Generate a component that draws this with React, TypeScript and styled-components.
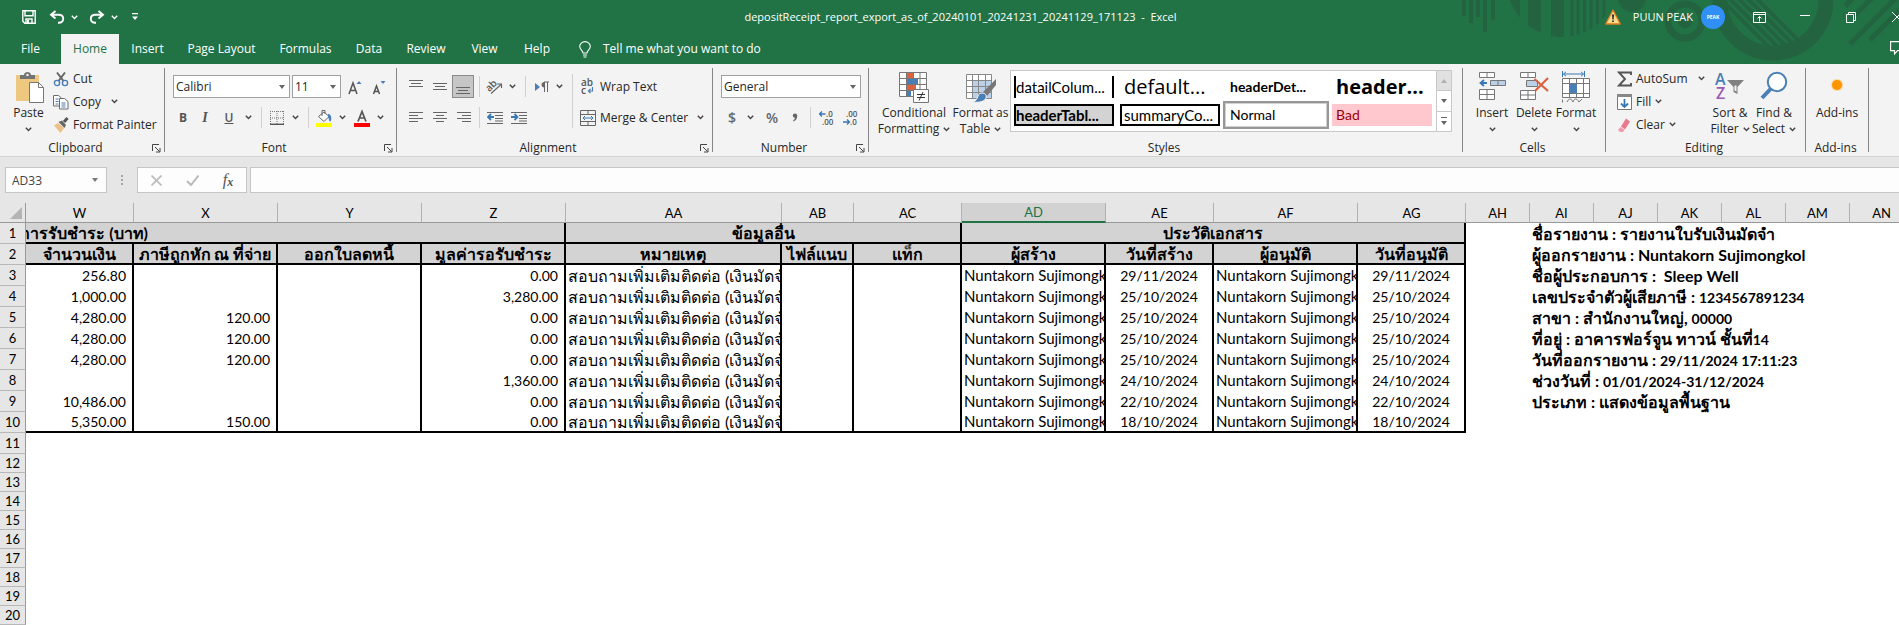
import React from 'react';
import styled, { createGlobalStyle, css } from 'styled-components';

const UI_FONT = '"Open Sans", "Noto Sans", sans-serif';
const SHEET_FONT = 'Lato, "Noto Sans", sans-serif';
const GREEN = '#217346';

const GlobalStyle = createGlobalStyle`
  *, *::before, *::after { box-sizing: border-box; }
  html, body { margin: 0; padding: 0; height: 100%; }
  #root { height: 100%; }
  body { background: #fff; color: #262626; font: 12px/16px ${UI_FONT}; overflow: hidden; }
  button, input, select { font: inherit; color: inherit; margin: 0; }
`;

const Window = styled.div`
  display: flex;
  flex-direction: column;
  min-height: 100%;
  overflow: hidden;
`;

/* ---------- title bar and tabs ---------- */

const Header = styled.header`
  position: relative;
  background: ${GREEN};
  color: #fff;
  overflow: hidden;
`;

const Artwork = styled.svg`
  position: absolute;
  top: 0;
  right: 0;
`;

const TitleBar = styled.div`
  position: relative;
  display: grid;
  grid-template-columns: 1fr auto 1fr;
  align-items: center;
  height: 34px;
  font-size: 11px;
`;

const QuickAccess = styled.div`
  display: flex;
  align-items: center;
  gap: 11px;
  padding-left: 20px;
`;

const BareButton = styled.button<{ $w?: number }>`
  display: flex;
  align-items: center;
  justify-content: center;
  flex: none;
  gap: 6px;
  width: ${p => (p.$w ? `${p.$w}px` : 'auto')};
  height: 24px;
  padding: 0;
  border: 0;
  background: none;
`;

const CloseButton = styled(BareButton)`
  margin-right: -32px;
`;

const DocTitle = styled.h1`
  margin: 0;
  padding-left: 22px;
  font-size: 11px;
  font-weight: 400;
  line-height: 16px;
  white-space: pre;
`;

const Account = styled.div`
  display: flex;
  align-items: center;
  justify-content: flex-end;
  white-space: nowrap;
`;

const UserName = styled.span`
  margin: 0 8px 0 12px;
`;

const Avatar = styled.span`
  display: flex;
  align-items: center;
  justify-content: center;
  width: 24px;
  height: 24px;
  margin-right: 22px;
  border-radius: 50%;
  background: #3090f8;
  font-size: 5px;
  font-weight: 700;
`;

const Tabs = styled.nav`
  position: relative;
  display: flex;
  height: 30px;
`;

const Tab = styled.button<{ $w: number; $active?: boolean }>`
  width: ${p => p.$w}px;
  padding: 0;
  border: 0;
  background: ${p => (p.$active ? '#f3f3f3' : 'none')};
  color: ${p => (p.$active ? GREEN : '#fff')};
  white-space: nowrap;
`;

const TellMe = styled.button`
  display: flex;
  align-items: center;
  gap: 12px;
  margin-left: 16px;
  padding: 0;
  border: 0;
  background: none;
`;

const CommentButton = styled(BareButton)`
  margin: 2px -8px 0 auto;
`;

/* ---------- ribbon ---------- */

const Ribbon = styled.section`
  display: flex;
  height: 93px;
  background: #f3f3f3;
  border-bottom: 1px solid #d2d2d2;
`;

const Group = styled.div<{ $w: number }>`
  display: flex;
  flex-direction: column;
  flex: none;
  width: ${p => p.$w}px;
`;

const GroupBody = styled.div<{ $pad?: number }>`
  display: flex;
  height: 76px;
  padding-left: ${p => p.$pad ?? 0}px;
`;

const GroupLabel = styled.div`
  display: flex;
  align-items: center;
  height: 16px;
  padding-right: 3px;
  text-align: center;

  span { flex: 1; }
`;

const Divider = styled.span`
  flex: none;
  width: 1px;
  margin: 4px 0;
  background: #868686;
`;

const Separator = styled.span<{ $left?: number; $right?: number }>`
  flex: none;
  width: 1px;
  height: 21px;
  margin: 0 ${p => p.$right ?? 0}px 0 ${p => p.$left ?? 0}px;
  background: #d0d0d0;
`;

const TallSeparator = styled.span`
  flex: none;
  width: 1px;
  height: 54px;
  margin: 10px 7px 0 6px;
  background: #d0d0d0;
`;

const LargeButton = styled.button<{ $w: number }>`
  display: flex;
  flex-direction: column;
  align-items: center;
  flex: none;
  width: ${p => p.$w}px;
  padding: 7px 0 0;
  border: 0;
  background: none;
  line-height: 16px;
  white-space: nowrap;

  > svg { margin-bottom: 2px; flex: none; }
`;

const Line = styled.span`
  display: flex;
  align-items: center;
  justify-content: center;
  gap: 4px;
  height: 16px;
`;

const SmallList = styled.div<{ $w?: number }>`
  display: flex;
  flex-direction: column;
  align-items: flex-start;
  flex: none;
  width: ${p => (p.$w ? `${p.$w}px` : 'auto')};
  padding-top: 3px;
`;

const SmallButton = styled.button<{ $gap?: number }>`
  display: flex;
  align-items: center;
  gap: 4px;
  height: 23px;
  padding: 0;
  border: 0;
  background: none;
  white-space: nowrap;

  > svg:last-child:not(:first-child) { margin-left: ${p => p.$gap ?? 0}px; }
`;

const ToolRows = styled.div`
  display: flex;
  flex-direction: column;
  gap: 8px;
  padding-top: 11px;
`;

const ToolRow = styled.div`
  display: flex;
  align-items: center;
  height: 23px;
`;

const Tool = styled.button<{ $w?: number; $on?: boolean; $styleName?: 'b' | 'i' | 'u' | 'sign' }>`
  display: flex;
  align-items: center;
  justify-content: center;
  flex: none;
  width: ${p => p.$w ?? 24}px;
  height: 23px;
  padding: 0;
  color: #555;
  border: ${p => (p.$on ? '1px solid #8a8a8a' : '0')};
  background: ${p => (p.$on ? '#c6c6c6' : 'none')};
  ${p => p.$styleName === 'b' && css`font-weight: 700;`}
  ${p => p.$styleName === 'i' && css`font: italic 700 14px "Liberation Serif", serif;`}
  ${p => p.$styleName === 'u' && css`font-weight: 600; text-decoration: underline;`}
  ${p => p.$styleName === 'sign' && css`font-size: 14px; font-weight: 600; color: #666;`}
`;

const Combo = styled.label<{ $w: number }>`
  position: relative;
  display: block;
  flex: none;
  width: ${p => p.$w}px;
  height: 23px;
  margin-right: 2px;

  &::after {
    content: '';
    position: absolute;
    top: 10px;
    right: 5px;
    border: 3px solid transparent;
    border-top: 4px solid #666;
    border-bottom: 0;
  }
`;

const ComboSelect = styled.select`
  width: 100%;
  height: 100%;
  padding: 0 2px;
  border: 1px solid #a0a0a0;
  border-radius: 0;
  background: #fff;
  appearance: none;
`;

/* ---------- style gallery ---------- */

const Gallery = styled.div`
  display: flex;
  width: 442px;
  height: 62px;
  margin-top: 6px;
  border: 1px solid #c8c8c8;
  background: #fff;
`;

const Swatches = styled.div`
  display: grid;
  grid-template-columns: repeat(4, 106px);
  grid-template-rows: 28px 28px;
  flex: 1;
  align-content: center;
`;

type SwatchKind = 'sides' | 'title' | 'bold' | 'boldTitle' | 'table' | 'box' | 'normal' | 'bad';

const Swatch = styled.button<{ $kind: SwatchKind }>`
  display: flex;
  align-items: center;
  height: 22px;
  margin: 3px;
  padding: 0 4px;
  overflow: hidden;
  border: 0;
  background: #fff;
  color: #000;
  font: 15px/18px ${SHEET_FONT};
  white-space: nowrap;
  ${p => p.$kind === 'sides' && css`padding: 0; border: solid #000; border-width: 0 2px;`}
  ${p => p.$kind === 'title' && css`font: 20px/22px "Open Sans", sans-serif;`}
  ${p => p.$kind === 'bold' && css`font-weight: 700; font-size: 14px;`}
  ${p => p.$kind === 'boldTitle' && css`font: 700 20px/22px "Open Sans", sans-serif;`}
  ${p => p.$kind === 'table' && css`padding: 0; border: 2px solid #000; background: #d3d3d3; font-weight: 700;`}
  ${p => p.$kind === 'box' && css`padding: 0 2px; border: 2px solid #000;`}
  ${p => p.$kind === 'normal' && css`height: 28px; margin: 0; padding: 0 5px; border: 2px solid #979797; outline: 1px solid #d2d0ce; outline-offset: -3px; font-size: 14px;`}
  ${p => p.$kind === 'bad' && css`background: #ffc7ce; color: #9c0006; font-size: 14px;`}
`;

const GalleryScroll = styled.div`
  display: flex;
  flex-direction: column;
  width: 15px;
  border-left: 1px solid #c8c8c8;
`;

const ScrollButton = styled.button<{ $off?: boolean }>`
  display: flex;
  flex: 1;
  align-items: center;
  justify-content: center;
  padding: 0;
  border: 0;
  background: ${p => (p.$off ? '#e1e1e1' : '#fff')};
  & + & { border-top: 1px solid #c8c8c8; }
`;

/* ---------- formula bar ---------- */

const FormulaBar = styled.section`
  display: flex;
  height: 46px;
  padding: 10px 0 10px 5px;
  background: #e6e6e6;
`;

const NameBox = styled.label`
  display: flex;
  align-items: center;
  width: 102px;
  padding-right: 8px;
  border: 1px solid #c6c6c6;
  background: #fdfdfd;
`;

const NameInput = styled.input`
  flex: 1;
  min-width: 0;
  height: 22px;
  padding: 0 6px;
  border: 0;
  background: none;
  color: #444;
`;

const Grip = styled.span`
  width: 30px;
  display: flex;
  align-items: center;
  justify-content: center;
`;

const FormulaButtons = styled.div`
  display: flex;
  align-items: center;
  width: 110px;
  margin-right: 3px;
  border: 1px solid #c6c6c6;
  background: #fdfdfd;
`;

const FunctionButton = styled(BareButton)`
  gap: 0;
  color: #555;
  font: italic 16px "Liberation Serif", serif;

  small { padding-top: 4px; font-size: 12px; font-weight: 700; }
`;

const FormulaInput = styled.input`
  flex: 1;
  min-width: 0;
  padding: 0 6px;
  border: 1px solid #c6c6c6;
  border-right: 0;
  background: #fdfdfd;
`;

/* ---------- sheet ---------- */

const SheetArea = styled.main`
  flex: 1;
  overflow: hidden;
  background: #fff;
`;

const Sheet = styled.table`
  width: 1914px;
  table-layout: fixed;
  border-collapse: separate;
  border-spacing: 0;
  color: #000;
  font: 14px/18px ${SHEET_FONT};
`;

const ColumnHead = styled.th<{ $active?: boolean }>`
  height: 20px;
  padding: 0;
  border-right: 1px solid #b1b1b1;
  border-bottom: 1px solid #999;
  background: #e6e6e6;
  font-weight: 400;
  font-size: 13px;
  ${p => p.$active && css`background: #d2d2d2; color: ${GREEN}; border-bottom: 2px solid ${GREEN};`}
`;

const Corner = styled(ColumnHead)`
  border-right-color: #999;

  svg { display: block; margin-left: auto; margin-right: 3px; }
`;

const RowHead = styled.th`
  padding: 0;
  border-right: 1px solid #999;
  border-bottom: 1px solid #b8b8b8;
  background: #e6e6e6;
  font-weight: 400;
  font-size: 13px;
  line-height: 16px;
`;

const Row = styled.tr<{ $short?: boolean }>`
  height: ${p => (p.$short ? 19 : 21)}px;
`;

const BandCell = styled.th`
  height: 21px;
  padding: 0;
  overflow: hidden;
  border-right: 2px solid #000;
  border-bottom: 2px solid #000;
  background: #d3d3d3;
  font-size: 16px;
  line-height: 19px;
  white-space: nowrap;
`;

const ScrolledTitle = styled.div`
  display: flex;
  justify-content: flex-end;
  width: 122px;
  overflow: hidden;
`;

const DataCell = styled.td<{ $align: 'left' | 'center' | 'right'; $size?: number; $last?: boolean }>`
  height: 21px;
  padding: ${p => (p.$align === 'right' ? '0 6px 0 0' : p.$align === 'left' ? '0 0 0 2px' : '0')};
  overflow: hidden;
  border-right: 2px solid #000;
  border-bottom: ${p => (p.$last ? '2px solid #000' : '0')};
  font-size: ${p => p.$size ?? 14}px;
  line-height: 19px;
  text-align: ${p => p.$align};
  white-space: nowrap;
`;

const InfoCell = styled.td`
  height: 21px;
  padding: 0 0 0 2px;
  font-size: 16px;
  font-weight: 700;
  line-height: 19px;
  white-space: pre;
`;

const Digits = styled.span`
  font-size: 14px;
`;

/* ---------- icons ---------- */

const Chevron = ({ color = '#444' }: { color?: string }) => (
  <svg width="7" height="5" viewBox="0 0 7 5" fill="none" stroke={color} strokeWidth="1.4"><path d="M.8.8 3.5 3.5 6.2.8" /></svg>
);

const Caret = ({ up, color = '#666' }: { up?: boolean; color?: string }) => (
  <svg width="6" height="4" viewBox="0 0 6 4" fill={color}><path d={up ? 'M3 0 6 4H0z' : 'M0 0h6L3 4z'} /></svg>
);

const Launcher = () => (
  <svg width="9" height="9" viewBox="0 0 9 9" fill="none" stroke="#444"><path d="M.5 7V.5H7M3 3l4.5 4.5M8 4v4H4" /></svg>
);

const SaveIcon = () => (
  <svg width="14" height="14" viewBox="0 0 14 14" fill="none" stroke="#fff" strokeWidth="1.4"><path d="M.8.8h12.4v12.4H2.8l-2-2zM3 .8v5h8v-5M4 13V9h6v4" /><path d="M5 10h2v3H5z" fill="#fff" stroke="none" /></svg>
);

const UndoIcon = ({ flip }: { flip?: boolean }) => (
  <svg width="16" height="14" viewBox="0 0 16 14" fill="none" stroke="#fff" strokeWidth="1.9">
    <g transform={flip ? 'matrix(-1 0 0 1 16 0)' : undefined}><path d="M6.5 1 2 4.8 6.5 8.6M2.4 4.8H9.5c3 0 4.7 1.7 4.7 4 0 2.5-2 4-4.2 4H9" /></g>
  </svg>
);

const CustomizeIcon = () => (
  <svg width="6" height="8" viewBox="0 0 6 8" fill="#fff"><path d="M0 0h6v1.3H0zM0 3.5h6L3 7z" /></svg>
);

const BulbIcon = () => (
  <svg width="12" height="17" viewBox="0 0 12 17" fill="none" stroke="#fff" strokeWidth="1.1"><path d="M4 12c0-2.5-3.3-3.4-3.3-6.4a5.3 5 0 0 1 10.6 0C11.3 8.600 8 9.500 8 12zM4 14h4M4.500 16h3" /></svg>
);

const WarningIcon = () => (
  <svg width="16" height="16" viewBox="0 0 16 16"><path d="M8 1 15.3 15H.7z" fill="#f9d98c" stroke="#e07a1c" strokeWidth="1.3" strokeLinejoin="round" /><path d="M7 5.500h2l-.4 5H7.400zM7.200 11.500h1.600V13H7.200z" fill="#222" /></svg>
);

const RibbonOptionsIcon = () => (
  <svg width="13" height="11" viewBox="0 0 13 11" fill="none" stroke="#fff"><path d="M.5.5h12v10H.5zM.5 2.500h12M6.500 9.500V4.500M4.500 6.500l2-2 2 2" /></svg>
);

const MinimizeIcon = () => (
  <svg width="10" height="11" viewBox="0 0 10 11" stroke="#fff"><path d="M0 3.500h10" /></svg>
);

const RestoreIcon = () => (
  <svg width="10" height="11" viewBox="0 0 10 11" fill="none" stroke="#fff"><path d="M.5 2.500h7v8h-7zM2.500 2.500v-2h7v8h-2" /></svg>
);

const CloseIcon = () => (
  <svg width="10" height="10" viewBox="0 0 10 10" stroke="#fff"><path d="m0 0 10 10M10 0 0 10" /></svg>
);

const CommentIcon = () => (
  <svg width="17" height="14" viewBox="0 0 17 14" fill="none" stroke="#fff" strokeWidth="1.1"><path d="M.6.6h15.800v9H7.500L4.500 13V9.600H.6z" /></svg>
);

const PasteIcon = () => (
  <svg width="30" height="32" viewBox="0 0 30 32">
    <path d="M2 4h23v26H2z" fill="#edc87e" /><path d="M6 8V4h4c0-4 7-4 7 0h4v4z" fill="#737373" /><circle cx="13.5" cy="4" r="1.2" fill="#f3f3f3" />
    <path d="M15.500 11.500h9l5 5v15h-14z" fill="#fff" stroke="#777" /><path d="M24.500 11.500v5h5" fill="none" stroke="#777" />
  </svg>
);

const CutIcon = () => (
  <svg width="16" height="16" viewBox="0 0 16 16" fill="none"><path d="M4 1.500 10.500 10M12 1.500 5.500 10" stroke="#666" strokeWidth="2" /><circle cx="4" cy="12" r="2.6" stroke="#4a7fb5" strokeWidth="1.4" /><circle cx="12" cy="12" r="2.6" stroke="#4a7fb5" strokeWidth="1.4" /></svg>
);

const CopyIcon = () => (
  <svg width="16" height="16" viewBox="0 0 16 16" fill="#fff" stroke="#6d6d6d"><path d="M.5 1.500h5l3 2.500v8h-8z" /><path d="M6.500 4.500h5l3.500 3V15H6.500z" /><path d="M2.500 5h3M2.500 7.500h3M2.500 10h3M8.500 9h4M8.500 11h4M8.500 13h4" stroke="#4a7fb5" /></svg>
);

const PainterIcon = () => (
  <svg width="16" height="16" viewBox="0 0 16 16"><path d="M1 8.500 5 6l6 5-3.500 5z" fill="#edc087" /><path d="M5.500 5 9 3.500l4 4.500-1.500 3z" fill="#666" /><path d="m11 5 3.500-4" stroke="#555" strokeWidth="3" /></svg>
);

const FontSizeIcon = ({ down }: { down?: boolean }) => (
  <svg width="14" height="16" viewBox="0 0 14 16" fill="none">
    {down
      ? <path d="m1.500 15 3-8 3 8M2.500 12.500h4" stroke="#555" strokeWidth="1.5" />
      : <path d="M1 15 5 4l4 11M2.300 11.500h5.400" stroke="#555" strokeWidth="1.5" />}
    <path d={down ? 'M8.500 2h5L11 5z' : 'M8.500 5h5L11 2z'} fill="#4a7fb5" />
  </svg>
);

const BordersIcon = () => (
  <svg width="14" height="14" viewBox="0 0 14 14" fill="none" stroke="#777"><path d="M0 .5h14M.5 0v14M13.500 0v14M7 0v14M0 7h14" strokeDasharray="1 1" /><path d="M0 13.300h14" stroke="#555" strokeWidth="1.4" /></svg>
);

const FillIcon = () => (
  <svg width="16" height="18" viewBox="0 0 16 18"><path d="M2.500 7.500 8 3l5 4.500-5 5z" fill="#fff" stroke="#666" /><path d="M6 7V1.500h3V5" fill="none" stroke="#666" /><path d="M12 5c3.500 0 4 5 2.500 7.500-2 0-1-3-2.500-4z" fill="#4a7fb5" /><path d="M0 14h16v4H0z" fill="#ff0" /></svg>
);

const FontColorIcon = () => (
  <svg width="16" height="18" viewBox="0 0 16 18" fill="none"><path d="m4 12.500 4-10 4 10M5.400 9h5.200" stroke="#555" strokeWidth="1.7" /><path d="M0 14h16v4H0z" fill="red" /></svg>
);

const Bars = ({ lines }: { lines: [number, number, number][] }) => (
  <svg width="14" height="17" viewBox="0 0 14 17" stroke="#666">
    {lines.map(([x1, x2, y]) => <path key={y} d={`M${x1} ${y}.5H${x2}`} />)}
  </svg>
);

const IndentIcon = ({ right }: { right?: boolean }) => (
  <svg width="16" height="14" viewBox="0 0 16 14" fill="none" stroke="#666">
    <path d="M0 1.500h16M8 4.500h8M8 7.500h8M8 10h8M0 12.500h16" />
    <path d={right ? 'M0 6h6M3.500 3 6.500 6 3.500 9' : 'M1 6h6M4 3 1 6l3 3'} stroke="#3a78b5" strokeWidth="1.8" />
  </svg>
);

const Abc = styled.text`
  font: 600 10px "Open Sans", sans-serif;
  fill: #555;
`;

const OrientationIcon = () => (
  <svg width="17" height="17" viewBox="0 0 17 17"><Abc transform="rotate(-45 6 10)" x="1" y="11">ab</Abc><path d="m5 15.500 10-9M11 6h4.500v4" fill="none" stroke="#666" strokeWidth="1.2" /></svg>
);

const DirectionIcon = () => (
  <svg width="14" height="12" viewBox="0 0 14 12"><path d="M0 2v8l5-4z" fill="#4a7fb5" /><path d="M9 1h5M9.500 1v10M12.500 1v10" stroke="#666" fill="none" /><path d="M9.500 1C5.500 1 5.500 6.500 9.500 6.500z" fill="#666" /></svg>
);

const WrapIcon = () => (
  <svg width="16" height="18" viewBox="0 0 16 18"><Abc x="1" y="8">ab</Abc><Abc x="1" y="16">c</Abc><path d="M12.500 9v4H8.500M10.500 11l-2 2 2 2" fill="none" stroke="#4a7fb5" strokeWidth="1.2" /></svg>
);

const MergeIcon = () => (
  <svg width="16" height="16" viewBox="0 0 16 16" fill="none" stroke="#666"><path d="M.5.5h15v15H.5zM.5 4.500h15M.5 11.500h15M8 .5v4M8 11.500v4" /><path d="M3 8h10M5 6 3 8l2 2M11 6l2 2-2 2" stroke="#3a78b5" /></svg>
);

const Decimal = styled.text`
  font: 600 8px "Open Sans", sans-serif;
  fill: #555;
`;

const DecimalIcon = ({ less }: { less?: boolean }) => (
  <svg width="16" height="16" viewBox="0 0 16 16">
    <Decimal x={less ? 3 : 7} y="7">{less ? '.00' : '.0'}</Decimal>
    <Decimal x={less ? 7 : 3} y="15">{less ? '.0' : '.00'}</Decimal>
    <path d={less ? 'M0 12h6M4 9.500 6.500 12 4 14.500' : 'M.5 4h6M3 1.500.5 4 3 6.500'} fill="none" stroke="#3a78b5" strokeWidth="1.3" />
  </svg>
);

const CommaIcon = () => (
  <svg width="6" height="9" viewBox="0 0 6 9" fill="#666"><circle cx="3" cy="2.6" r="2.2" /><path d="M5.200 2.500C5.300 5.500 4 7.500 1.500 8.600L1 7.800C2.500 6.800 3 5.500 3 4z" /></svg>
);

const ConditionalIcon = () => (
  <svg width="30" height="32" viewBox="0 0 30 32">
    <path d="M.5 1.500h27v24H.5z" fill="#fff" /><path d="M8 1h6v7H8zM8 14h9v6H8z" fill="#d9623f" /><path d="M8 8h11v6H8zM8 20h4v6H8z" fill="#4a7fb5" />
    <path d="M.5 1.500h27v24H.5zM7.500 1v25M14.500 1v6M21 1v25M0 7.500h28M0 13.500h28M0 19.500h28" fill="none" stroke="#777" />
    <path d="M14.500 18.500h15v13h-15z" fill="#fff" stroke="#777" /><path d="M18 23.500h8M18 26.500h8M24 21l-4 8.500" stroke="#333" />
  </svg>
);

const FormatTableIcon = () => (
  <svg width="32" height="32" viewBox="0 0 32 32">
    <path d="M1.500 3.500h25v24h-25z" fill="#fff" /><path d="M8 9h18v18H8z" fill="#bcd0e8" />
    <path d="M1.500 3.500h25v24h-25zM7.500 3v24M13.500 3v24M20.500 3v24M1 9.500h25M1 15.500h25M1 21.500h25" fill="none" stroke="#888" />
    <path d="M31 8v6l-9 11-4-4z" fill="#777" /><path d="M17 22c3 0 5 2 4 5-1 3-6 5-13 4 3-1 4-3 5-6 1-2 2-3 4-3z" fill="#4a7fb5" stroke="#f3f3f3" />
  </svg>
);

const InsertIcon = () => (
  <svg width="28" height="32" viewBox="0 0 28 32" fill="#fff" stroke="#777"><path d="M1.500 1.500h15v5h-15zM9 1.500v5M1.500 18.500h15v10h-15zM9 18.500v10M1.500 23.500h15" /><path d="M12.500 9.500h15v5h-15zM20 9.500v5" fill="#bcd0e8" /><path d="M3 12h6M6 9l-3.500 3L6 15" fill="none" stroke="#3a78b5" strokeWidth="1.8" /></svg>
);

const DeleteIcon = () => (
  <svg width="30" height="32" viewBox="0 0 30 32" fill="#fff" stroke="#777"><path d="M1.500 1.500h15v5h-15zM9 1.500v5M1.500 19.500h15v9h-15zM9 19.500v9M1.500 24h15" /><path d="M7.500 9.500h11v6h-11z" fill="#bcd0e8" /><path d="M15.500 8 29 20M29 7 16 20" fill="none" stroke="#d9623f" strokeWidth="2.2" /></svg>
);

const FormatIcon = () => (
  <svg width="30" height="32" viewBox="0 0 30 32" fill="#fff" stroke="#777"><path d="M1.500 7.500h27v19h-27zM8.500 7v20M15.500 7v20M22.500 7v20M1 12.500h28M1 22.500h28" /><path d="M9 13h7v9H9z" fill="#4a7fb5" stroke="none" /><path d="M1.500 31.500v-3M6 31c2-4 4-4 6 0 1-4 4-4 6 0l3-3" fill="none" /><path d="M1.500 0v6M23.500 0v6M2.500 3h20M5 .8 2.500 3 5 5.200M20 .8 22.500 3 20 5.200" fill="none" stroke="#3a78b5" /></svg>
);

const SumIcon = () => (
  <svg width="15" height="16" viewBox="0 0 15 16" fill="none" stroke="#555" strokeWidth="1.9"><path d="M14 4V1.500H2L8 8l-6 6.500h12V12" /></svg>
);

const FillDownIcon = () => (
  <svg width="15" height="16" viewBox="0 0 15 16" fill="#fff" stroke="#777"><path d="M.5.5h14v15H.5z" /><path d="M0 0h15v3H0z" fill="#888" stroke="none" /><path d="M7.500 5v8M4 9.500l3.500 3.500L11 9.500" fill="none" stroke="#3a78b5" strokeWidth="1.8" /></svg>
);

const EraserIcon = () => (
  <svg width="15" height="16" viewBox="0 0 15 16"><path d="m9 1.500 4 3-5 8-4-3z" fill="#e8798f" /><path d="m3.500 10 4 3L6 15H3L1 13z" fill="#f09aaa" /></svg>
);

const SortLetter = styled.text<{ $color: string }>`
  font: 600 16px "Open Sans", sans-serif;
  fill: ${p => p.$color};
`;

const SortIcon = () => (
  <svg width="30" height="32" viewBox="0 0 30 32"><SortLetter $color="#4a7fb5" x="0" y="14">A</SortLetter><SortLetter $color="#9b59b6" x="1" y="28">Z</SortLetter><path d="M12 9h17l-6.500 7v7l-4-2v-5z" fill="#808080" /><path d="M19.500 14.500h2v6l-2-1z" fill="#f3f3f3" /></svg>
);

const FindIcon = () => (
  <svg width="28" height="32" viewBox="0 0 28 32" fill="none" stroke="#4a7fb5"><circle cx="17" cy="11" r="9.2" strokeWidth="2" fill="#fff" /><path d="M10.500 18 2 27" strokeWidth="4" /></svg>
);

const AddInsIcon = () => (
  <svg width="30" height="32" viewBox="0 0 30 32"><circle cx="15" cy="14" r="6" fill="#ffd699" /><circle cx="15" cy="14" r="5" fill="#ff9500" /></svg>
);

const HeaderArt = () => (
  <Artwork width="440" height="64" viewBox="9 0 440 64" fill="none" stroke="#236340" aria-hidden="true">
    <defs>
      <clipPath id="disc"><circle cx="112" cy="-18" r="55" /></clipPath>
      <clipPath id="hole"><circle cx="323" cy="0" r="46" /></clipPath>
    </defs>
    <path d="M14 0v16M21 0v23M28 0v17M35 0v32M43 0v20" strokeWidth="4" />
    <g clipPath="url(#disc)">
      <path d="M63.500 0v40M84.500 0v40M107.500 0v40" strokeWidth="13" />
      <path d="M122 0v40M128 0v40M134.500 0v40M141 0v40M147.500 0v40M154 0v40" strokeWidth="3" />
    </g>
    <circle cx="182" cy="-2" r="14" fill="#236340" stroke="none" />
    <circle cx="235" cy="21" r="17" strokeWidth="7" /><circle cx="235" cy="21" r="7" fill="#236340" stroke="none" />
    <circle cx="323" cy="0" r="53" strokeWidth="15" />
    <path clipPath="url(#hole)" d="m262-10 60 60M271-10l60 60M280-10l60 60M289-10l60 60M298-10l60 60" strokeWidth="4" />
    <path d="m395 6 12-12M403 17l24-24M400 44l50-50M420 40l32-32" strokeWidth="5" />
  </Artwork>
);

/* ---------- data ---------- */

const tabs: [string, number][] = [
  ['File', 61], ['Home', 58], ['Insert', 57], ['Page Layout', 91], ['Formulas', 77],
  ['Data', 50], ['Review', 64], ['View', 53], ['Help', 52],
];

const swatches: [string, SwatchKind][] = [
  ['datailColum...', 'sides'], ['default...', 'title'], ['headerDet...', 'bold'], ['header...', 'boldTitle'],
  ['headerTabl...', 'table'], ['summaryCo...', 'box'], ['Normal', 'normal'], ['Bad', 'bad'],
];

const columns: [string, number][] = [
  ['W', 108], ['X', 144], ['Y', 144], ['Z', 144], ['AA', 216], ['AB', 72], ['AC', 108], ['AD', 144],
  ['AE', 108], ['AF', 144], ['AG', 108], ['AH', 64], ['AI', 64], ['AJ', 64], ['AK', 64], ['AL', 64],
  ['AM', 64], ['AN', 64],
];

const headings = [
  'จำนวนเงิน', 'ภาษีถูกหัก ณ ที่จ่าย', 'ออกใบลดหนี้', 'มูลค่ารอรับชำระ', 'หมายเหตุ', 'ไฟล์แนบ', 'แท็ก',
  'ผู้สร้าง', 'วันที่สร้าง', 'ผู้อนุมัติ', 'วันที่อนุมัติ',
];

const records: [string, string, string, string][] = [
  ['256.80', '', '0.00', '29/11/2024'],
  ['1,000.00', '', '3,280.00', '25/10/2024'],
  ['4,280.00', '120.00', '0.00', '25/10/2024'],
  ['4,280.00', '120.00', '0.00', '25/10/2024'],
  ['4,280.00', '120.00', '0.00', '25/10/2024'],
  ['', '', '1,360.00', '24/10/2024'],
  ['10,486.00', '', '0.00', '22/10/2024'],
  ['5,350.00', '150.00', '0.00', '18/10/2024'],
];

const NOTE = 'สอบถามเพิ่มเติมติดต่อ (เงินมัดจำ)';
const PERSON = 'Nuntakorn Sujimongkol';

const info: [string, string?][] = [
  ['ชื่อรายงาน : รายงานใบรับเงินมัดจำ'],
  ['ผู้ออกรายงาน : Nuntakorn Sujimongkol'],
  ['ชื่อผู้ประกอบการ :  Sleep Well'],
  ['เลขประจำตัวผู้เสียภาษี : ', '1234567891234'],
  ['สาขา : สำนักงานใหญ่, ', '00000'],
  ['ที่อยู่ : อาคารฟอร์จูน ทาวน์ ชั้นที่', '14'],
  ['วันที่ออกรายงาน : ', '29/11/2024 17:11:23'],
  ['ช่วงวันที่ : ', '01/01/2024-31/12/2024'],
  ['ประเภท : แสดงข้อมูลพื้นฐาน'],
];

const emptyRows = Array.from({ length: 10 }, (_, i) => i + 11);

/* ---------- parts ---------- */

const RibbonGroup = ({ label, width, pad, launcher, children }: {
  label: string; width: number; pad?: number; launcher?: boolean; children: React.ReactNode;
}) => (
  <>
    <Group $w={width}>
      <GroupBody $pad={pad}>{children}</GroupBody>
      <GroupLabel>
        <span>{label}</span>
        {launcher && <BareButton $w={10} aria-label={`${label} settings`}><Launcher /></BareButton>}
      </GroupLabel>
    </Group>
    <Divider />
  </>
);

const Large = ({ icon, lines, width, drop }: { icon: React.ReactNode; lines: string[]; width: number; drop?: boolean }) => (
  <LargeButton $w={width}>
    {icon}
    {lines.map((text, i) => (
      <Line key={text}>{text}{drop && lines.length > 1 && i === lines.length - 1 && <Chevron />}</Line>
    ))}
    {drop && lines.length === 1 && <Line><Chevron /></Line>}
  </LargeButton>
);

const DropTool = ({ label, width = 14 }: { label: string; width?: number }) => (
  <Tool $w={width} aria-label={label}><Chevron /></Tool>
);

const InfoTail = ({ row }: { row: number }) => {
  const entry = info[row];
  return (
    <>
      <td />
      {entry ? <InfoCell colSpan={6}>{entry[0]}{entry[1] && <Digits>{entry[1]}</Digits>}</InfoCell> : <td colSpan={6} />}
    </>
  );
};

export default function App() {
  return (
    <Window>
      <GlobalStyle />
      <Header>
        <HeaderArt />
        <TitleBar>
          <QuickAccess>
            <BareButton $w={18} aria-label="Save"><SaveIcon /></BareButton>
            <BareButton $w={29} aria-label="Undo"><UndoIcon /><Chevron color="#fff" /></BareButton>
            <BareButton $w={29} aria-label="Redo"><UndoIcon flip /><Chevron color="#fff" /></BareButton>
            <BareButton $w={12} aria-label="Customize toolbar"><CustomizeIcon /></BareButton>
          </QuickAccess>
          <DocTitle>{'depositReceipt_report_export_as_of_20240101_20241231_20241129_171123  -  Excel'}</DocTitle>
          <Account>
            <WarningIcon />
            <UserName>PUUN PEAK</UserName>
            <Avatar>PEAK</Avatar>
            <BareButton $w={24} aria-label="Ribbon display options"><RibbonOptionsIcon /></BareButton>
            <BareButton $w={68} aria-label="Minimize"><MinimizeIcon /></BareButton>
            <BareButton $w={24} aria-label="Restore"><RestoreIcon /></BareButton>
            <CloseButton $w={68} aria-label="Close"><CloseIcon /></CloseButton>
          </Account>
        </TitleBar>
        <Tabs>
          {tabs.map(([name, w]) => <Tab key={name} $w={w} $active={name === 'Home'}>{name}</Tab>)}
          <TellMe><BulbIcon />Tell me what you want to do</TellMe>
          <CommentButton aria-label="Comments"><CommentIcon /></CommentButton>
        </Tabs>
      </Header>

      <Ribbon>
        <RibbonGroup label="Clipboard" width={164} launcher pad={4}>
          <Large icon={<PasteIcon />} lines={['Paste']} width={49} drop />
          <SmallList>
            <SmallButton><CutIcon />Cut</SmallButton>
            <SmallButton $gap={6}><CopyIcon />Copy<Chevron /></SmallButton>
            <SmallButton><PainterIcon />Format Painter</SmallButton>
          </SmallList>
        </RibbonGroup>

        <RibbonGroup label="Font" width={231} launcher pad={8}>
          <ToolRows>
            <ToolRow>
              <Combo $w={117}><ComboSelect aria-label="Font name"><option>Calibri</option></ComboSelect></Combo>
              <Combo $w={49}><ComboSelect aria-label="Font size"><option>11</option></ComboSelect></Combo>
              <Tool aria-label="Increase font size"><FontSizeIcon /></Tool>
              <Tool aria-label="Decrease font size"><FontSizeIcon down /></Tool>
            </ToolRow>
            <ToolRow>
              <Tool $w={20} $styleName="b">B</Tool>
              <Tool $styleName="i">I</Tool>
              <Tool $styleName="u">U</Tool>
              <DropTool label="Underline styles" />
              <Separator $left={6} $right={6} />
              <Tool $w={18} aria-label="Borders"><BordersIcon /></Tool>
              <DropTool label="Border styles" width={18} />
              <Separator $left={4} $right={6} />
              <Tool $w={18} aria-label="Fill colour"><FillIcon /></Tool>
              <DropTool label="Fill colours" width={18} />
              <Tool $w={22} aria-label="Font colour"><FontColorIcon /></Tool>
              <DropTool label="Font colours" />
            </ToolRow>
          </ToolRows>
        </RibbonGroup>

        <RibbonGroup label="Alignment" width={315} launcher pad={7}>
          <ToolRows>
            <ToolRow>
              <Tool aria-label="Top align"><Bars lines={[[0, 14, 2], [2, 12, 5], [0, 14, 8]]} /></Tool>
              <Tool aria-label="Middle align"><Bars lines={[[0, 14, 5], [2, 12, 8], [0, 14, 11]]} /></Tool>
              <Tool $w={22} $on aria-label="Bottom align"><Bars lines={[[0, 14, 9], [2, 12, 12], [0, 14, 15]]} /></Tool>
              <Separator $left={5} $right={5} />
              <Tool $w={18} aria-label="Orientation"><OrientationIcon /></Tool>
              <DropTool label="Orientation options" width={18} />
              <Separator $left={4} $right={6} />
              <Tool $w={20} aria-label="Text direction"><DirectionIcon /></Tool>
              <DropTool label="Text direction options" />
            </ToolRow>
            <ToolRow>
              <Tool aria-label="Align left"><Bars lines={[[0, 14, 3], [0, 9, 6], [0, 14, 9], [0, 9, 12]]} /></Tool>
              <Tool aria-label="Center"><Bars lines={[[0, 14, 3], [3, 11, 6], [0, 14, 9], [3, 11, 12]]} /></Tool>
              <Tool aria-label="Align right"><Bars lines={[[0, 14, 3], [5, 14, 6], [0, 14, 9], [5, 14, 12]]} /></Tool>
              <Separator $left={3} $right={3} />
              <Tool aria-label="Decrease indent"><IndentIcon /></Tool>
              <Tool aria-label="Increase indent"><IndentIcon right /></Tool>
            </ToolRow>
          </ToolRows>
          <TallSeparator />
          <ToolRows>
            <SmallButton><WrapIcon />Wrap Text</SmallButton>
            <SmallButton $gap={5}><MergeIcon />Merge &amp; Center<Chevron /></SmallButton>
          </ToolRows>
        </RibbonGroup>

        <RibbonGroup label="Number" width={155} launcher pad={8}>
          <ToolRows>
            <ToolRow>
              <Combo $w={140}><ComboSelect aria-label="Number format"><option>General</option></ComboSelect></Combo>
            </ToolRow>
            <ToolRow>
              <Tool $w={22} $styleName="sign" aria-label="Accounting format">$</Tool>
              <DropTool label="Currencies" />
              <Tool $w={30} $styleName="sign" aria-label="Percent">%</Tool>
              <Tool $w={16} aria-label="Comma style"><CommaIcon /></Tool>
              <Separator $left={7} $right={4} />
              <Tool aria-label="Increase decimal"><DecimalIcon /></Tool>
              <Tool aria-label="Decrease decimal"><DecimalIcon less /></Tool>
            </ToolRow>
          </ToolRows>
        </RibbonGroup>

        <RibbonGroup label="Styles" width={593} pad={8}>
          <Large icon={<ConditionalIcon />} lines={['Conditional', 'Formatting']} width={74} drop />
          <Large icon={<FormatTableIcon />} lines={['Format as', 'Table']} width={59} drop />
          <Gallery>
            <Swatches>
              {swatches.map(([text, kind]) => <Swatch key={text} $kind={kind}>{text}</Swatch>)}
            </Swatches>
            <GalleryScroll>
              <ScrollButton $off aria-label="Previous styles"><Caret up color="#b0b0b0" /></ScrollButton>
              <ScrollButton aria-label="Next styles"><Caret /></ScrollButton>
              <ScrollButton aria-label="More styles">
                <svg width="6" height="8" viewBox="0 0 6 8" fill="#666"><path d="M0 0h6v1H0zM0 4h6L3 8z" /></svg>
              </ScrollButton>
            </GalleryScroll>
          </Gallery>
        </RibbonGroup>

        <RibbonGroup label="Cells" width={142} pad={8}>
          <Large icon={<InsertIcon />} lines={['Insert']} width={42} drop />
          <Large icon={<DeleteIcon />} lines={['Delete']} width={42} drop />
          <Large icon={<FormatIcon />} lines={['Format']} width={42} drop />
        </RibbonGroup>

        <RibbonGroup label="Editing" width={199} pad={11}>
          <SmallList $w={91}>
            <SmallButton $gap={6}><SumIcon />AutoSum<Chevron /></SmallButton>
            <SmallButton><FillDownIcon />Fill<Chevron /></SmallButton>
            <SmallButton><EraserIcon />Clear<Chevron /></SmallButton>
          </SmallList>
          <Large icon={<SortIcon />} lines={['Sort &', 'Filter']} width={44} drop />
          <Large icon={<FindIcon />} lines={['Find &', 'Select']} width={44} drop />
        </RibbonGroup>

        <RibbonGroup label="Add-ins" width={62}>
          <Large icon={<AddInsIcon />} lines={['Add-ins']} width={62} />
        </RibbonGroup>
      </Ribbon>

      <FormulaBar>
        <NameBox>
          <NameInput aria-label="Name box" defaultValue="AD33" />
          <Caret color="#777" />
        </NameBox>
        <Grip><svg width="2" height="11" viewBox="0 0 2 11" fill="#a6a6a6"><path d="M0 0h2v2H0zM0 4h2v2H0zM0 8h2v2H0z" /></svg></Grip>
        <FormulaButtons>
          <BareButton $w={36} aria-label="Cancel"><svg width="11" height="11" viewBox="0 0 11 11" stroke="#bbb" strokeWidth="1.6"><path d="m.5.5 10 10M10.500.5l-10 10" /></svg></BareButton>
          <BareButton $w={36} aria-label="Enter"><svg width="13" height="11" viewBox="0 0 13 11" fill="none" stroke="#bbb" strokeWidth="2"><path d="m1 6 4 4 7.500-9.500" /></svg></BareButton>
          <FunctionButton $w={36} aria-label="Insert function">f<small>x</small></FunctionButton>
        </FormulaButtons>
        <FormulaInput aria-label="Formula" />
      </FormulaBar>

      <SheetArea>
        <Sheet>
          <colgroup>
            <col width={26} />
            {columns.map(([name, w]) => <col key={name} width={w} />)}
          </colgroup>
          <thead>
            <tr>
              <Corner aria-label="Select all"><svg width="12" height="12" viewBox="0 0 12 12" fill="#b4b4b4"><path d="M12 0v12H0z" /></svg></Corner>
              {columns.map(([name]) => <ColumnHead key={name} scope="col" $active={name === 'AD'}>{name}</ColumnHead>)}
            </tr>
          </thead>
          <tbody>
            <Row>
              <RowHead scope="row">1</RowHead>
              <BandCell colSpan={4}><ScrolledTitle><span>การรับชำระ (บาท)</span></ScrolledTitle></BandCell>
              <BandCell colSpan={3}>ข้อมูลอื่น</BandCell>
              <BandCell colSpan={4}>ประวัติเอกสาร</BandCell>
              <InfoTail row={0} />
            </Row>
            <Row>
              <RowHead scope="row">2</RowHead>
              {headings.map(text => <BandCell key={text}>{text}</BandCell>)}
              <InfoTail row={1} />
            </Row>
            {records.map(([amount, tax, pending, date], i) => {
              const last = i === records.length - 1;
              return (
                <Row key={i}>
                  <RowHead scope="row">{i + 3}</RowHead>
                  <DataCell $align="right" $last={last}>{amount}</DataCell>
                  <DataCell $align="right" $last={last}>{tax}</DataCell>
                  <DataCell $align="right" $last={last} />
                  <DataCell $align="right" $last={last}>{pending}</DataCell>
                  <DataCell $align="left" $size={16} $last={last}>{NOTE}</DataCell>
                  <DataCell $align="left" $last={last} />
                  <DataCell $align="left" $last={last} />
                  <DataCell $align="left" $size={15} $last={last}>{PERSON}</DataCell>
                  <DataCell $align="center" $last={last}>{date}</DataCell>
                  <DataCell $align="left" $size={15} $last={last}>{PERSON}</DataCell>
                  <DataCell $align="center" $last={last}>{date}</DataCell>
                  <InfoTail row={i + 2} />
                </Row>
              );
            })}
            {emptyRows.map(n => (
              <Row key={n} $short={n > 11}>
                <RowHead scope="row">{n}</RowHead>
                <td colSpan={18} />
              </Row>
            ))}
          </tbody>
        </Sheet>
      </SheetArea>
    </Window>
  );
}
